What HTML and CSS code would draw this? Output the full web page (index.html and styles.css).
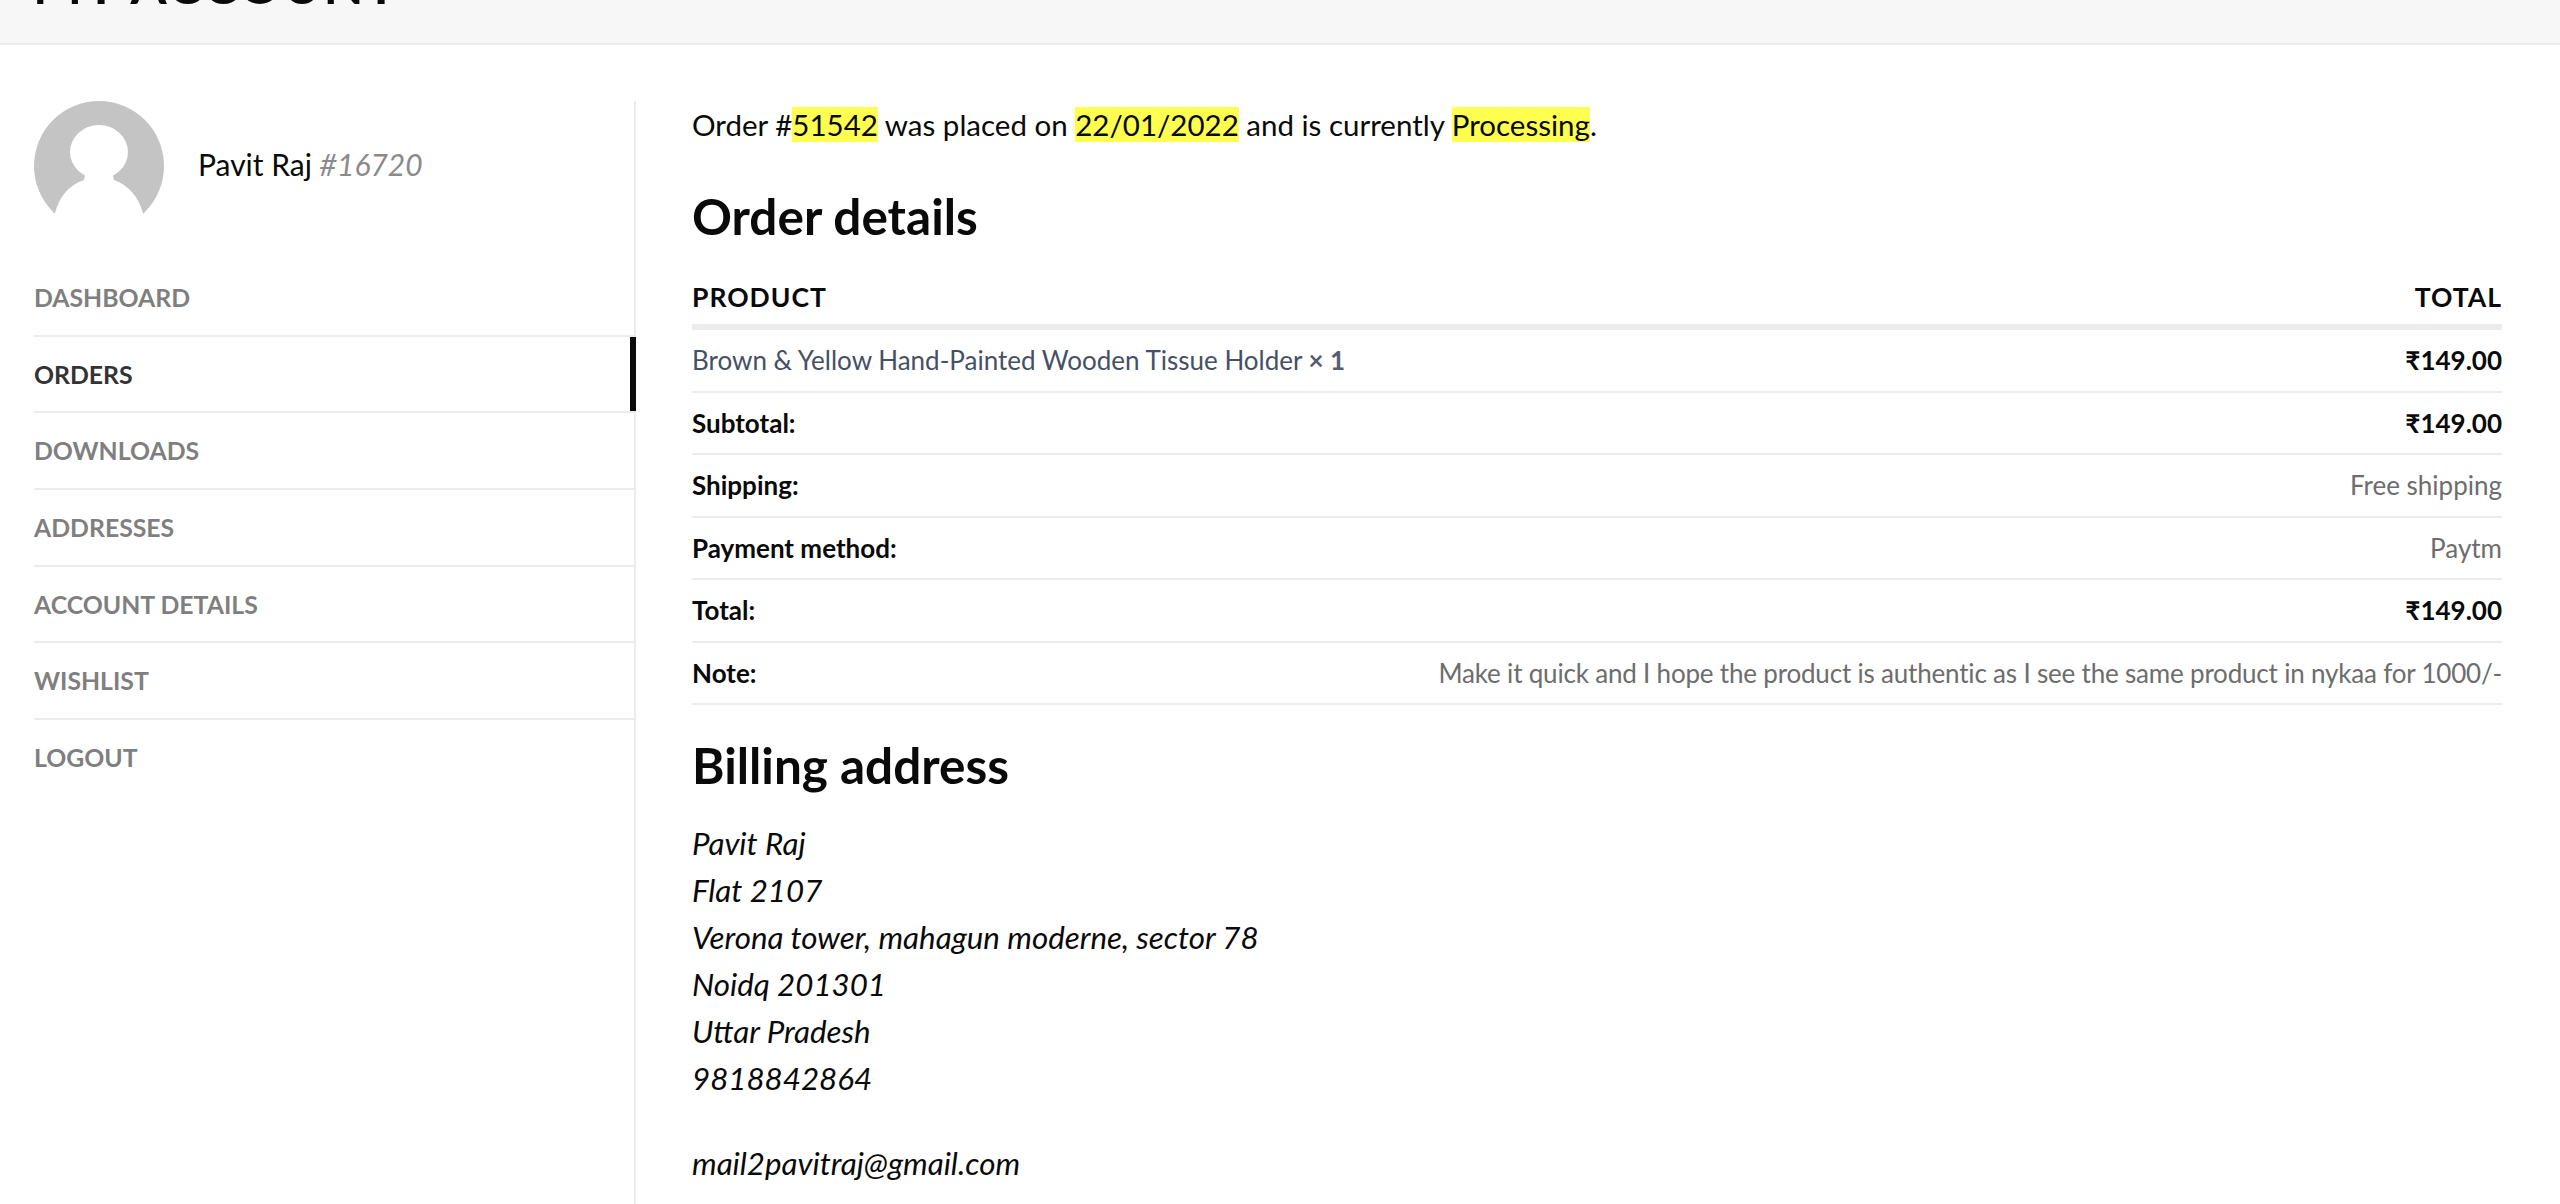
FILE: index.html
```html
<!DOCTYPE html>
<html lang="en">

<head>
    <meta charset="UTF-8">
    <meta name="viewport" content="width=device-width, initial-scale=1.0">
    <title>My Account</title>
    <link rel="stylesheet" href="styles.css">
</head>

<body>

    <header class="pageHead">
        <h1 class="pageTitle">MY ACCOUNT</h1>
    </header>

    <div class="account">
        <aside class="side">
            <div class="user">
                <svg class="avatar" viewBox="0 0 130 130" width="130" height="130">
                    <circle cx="65" cy="65" r="65" fill="#c4c4c4" />
                    <ellipse cx="65" cy="51" rx="29" ry="27" fill="#fff" />
                    <path d="M52 70 L50 79 C34 84 25 97 21 112 L21 130 L109 130 L109 112 C105 97 95 84 80 79 L78 70 Z" fill="#fff" />
                </svg>
                <div class="userName">Pavit Raj <em class="userId">#16720</em></div>
            </div>
            <ul class="nav">
                <li><a href="#">DASHBOARD</a></li>
                <li class="active"><a href="#">ORDERS</a></li>
                <li><a href="#">DOWNLOADS</a></li>
                <li><a href="#">ADDRESSES</a></li>
                <li><a href="#">ACCOUNT DETAILS</a></li>
                <li><a href="#">WISHLIST</a></li>
                <li><a href="#">LOGOUT</a></li>
            </ul>
        </aside>

        <main class="main">
            <p class="summary">Order #<mark>51542</mark> was placed on <mark>22/01/2022</mark> and is currently <mark>Processing</mark>.</p>

            <h2 class="orderHead">Order details</h2>
            <table class="order">
                <thead>
                    <tr>
                        <th>PRODUCT</th>
                        <th class="right">TOTAL</th>
                    </tr>
                </thead>
                <tbody>
                    <tr>
                        <td><a class="prod" href="#">Brown &amp; Yellow Hand-Painted Wooden Tissue Holder</a> <span class="qty">× 1</span></td>
                        <td class="right money">₹149.00</td>
                    </tr>
                    <tr>
                        <td class="label">Subtotal:</td>
                        <td class="right money">₹149.00</td>
                    </tr>
                    <tr>
                        <td class="label">Shipping:</td>
                        <td class="right">Free shipping</td>
                    </tr>
                    <tr>
                        <td class="label">Payment method:</td>
                        <td class="right">Paytm</td>
                    </tr>
                    <tr>
                        <td class="label">Total:</td>
                        <td class="right money">₹149.00</td>
                    </tr>
                    <tr>
                        <td class="label">Note:</td>
                        <td class="right note">Make it quick and I hope the product is authentic as I see the same product in nykaa for 1000/-</td>
                    </tr>
                </tbody>
            </table>

            <h2 class="billHead">Billing address</h2>
            <address class="addr">
                Pavit Raj<br>
                Flat 2107<br>
                Verona tower, mahagun moderne, sector 78<br>
                Noidq 201301<br>
                Uttar Pradesh<br>
                9818842864
                <p class="mail">mail2pavitraj@gmail.com</p>
            </address>
        </main>
    </div>

</body>

</html>
```

FILE: styles.css
```css
html,
body {
    height: 100%;
}

body {
    margin: 0;
    overflow: hidden;
    background-color: #fff;
    color: #0a0a0a;
    font-family: "Lato", "Liberation Sans", sans-serif;
    font-size: 29.5px;
    line-height: 47px;
}

.pageHead {
    display: flex;
    align-items: flex-end;
    height: 43px;
    padding-left: 33px;
    background-color: #f7f7f7;
    border-bottom: 2px solid #ececec;
    overflow: hidden;
}

.pageTitle {
    margin: 0 0 33px;
    font-size: 52px;
    font-weight: 700;
    line-height: 52px;
    letter-spacing: 2px;
    white-space: nowrap;
}

.account {
    display: flex;
    height: calc(100% - 45px);
    padding: 56px 58px 0 34px;
}

.side {
    flex: none;
    width: 600px;
    border-right: 2px solid #ececec;
}

.user {
    display: flex;
    align-items: center;
    gap: 34px;
    height: 130px;
    margin-bottom: 29px;
}

.avatar {
    flex: none;
}

.userName {
    margin-top: -3px;
    font-size: 30px;
    white-space: nowrap;
}

.userId {
    color: #8a8a8a;
}

.nav {
    margin: 0;
    padding: 0;
    list-style: none;
}

.nav li {
    height: 74.7px;
    border-bottom: 2px solid #ececec;
}

.nav li:last-child {
    border-bottom: 0;
}

.nav a {
    display: block;
    height: 74.7px;
    color: #7f7f7f;
    font-size: 24.8px;
    font-weight: 700;
    line-height: 75px;
    text-decoration: none;
}

.nav .active {
    position: relative;
}

.nav .active a {
    color: #333;
}

/* marker sits over the sidebar's right border */
.nav .active::after {
    content: "";
    position: absolute;
    top: 0;
    right: -2px;
    width: 6px;
    height: 74.7px;
    background-color: #0a0a0a;
}

.main {
    flex: 1;
    min-width: 0;
    padding-left: 56px;
}

.summary {
    margin: 0 0 35px;
}

mark {
    background-color: #ffff50;
    color: inherit;
}

.orderHead,
.billHead {
    margin: 0;
    font-size: 49.5px;
    font-weight: 700;
    line-height: 66px;
}

.order {
    width: 100%;
    margin-top: 12px;
    border-collapse: collapse;
    font-size: 26px;
    line-height: 38px;
}

.order th {
    height: 55px;
    padding: 8px 0 0;
    border-bottom: 6px solid #ececec;
    font-size: 26.5px;
    font-weight: 700;
    letter-spacing: 1px;
    text-align: left;
}

.order th.right {
    text-align: right;
}

.order td {
    height: 60.5px;
    padding: 0;
    border-bottom: 2px solid #ececec;
    color: #6d6d6d;
}

.order .right {
    text-align: right;
}

.order .label,
.order .money {
    color: #0a0a0a;
    font-weight: 700;
}

.order .note {
    letter-spacing: -0.19px;
}

.prod {
    color: #465064;
    text-decoration: none;
}

.qty {
    color: #555e70;
    font-weight: 700;
}

.billHead {
    margin-top: 27px;
}

.addr {
    margin-top: 22px;
    font-size: 31.3px;
    font-style: italic;
}

.mail {
    margin: 38px 0 0;
}
```
